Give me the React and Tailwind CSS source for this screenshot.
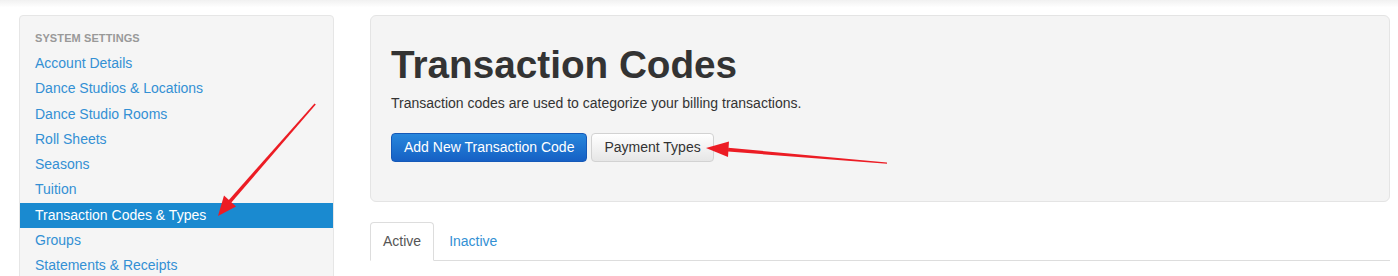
import React from "react";

const items = [
  "Account Details",
  "Dance Studios & Locations",
  "Dance Studio Rooms",
  "Roll Sheets",
  "Seasons",
  "Tuition",
  "Transaction Codes & Types",
  "Groups",
  "Statements & Receipts",
];

function Arrows() {
  return (
    <svg
      className="absolute left-0 top-0 pointer-events-none"
      width="1398"
      height="276"
      viewBox="0 0 1398 276"
    >
      <polygon points="314.5,103.5 315.8,104.6 231.4,202.4 228.4,200.4" fill="#ec1c24" />
      <polygon points="218,216 236,206.5 224,195.5" fill="#ec1c24" />
      <polygon points="887,162.5 887,163.8 728,151.5 728.2,147.8" fill="#ec1c24" />
      <polygon points="706,148 729,141.5 728,157" fill="#ec1c24" />
    </svg>
  );
}

export default function App() {
  return (
    <div
      className="relative w-[1398px] h-[276px] overflow-hidden bg-white text-[#333]"
      style={{ fontFamily: '"Liberation Sans", Arial, sans-serif' }}
    >
      <div className="h-[15px] bg-gradient-to-b from-[#f1f1f1] via-white to-white" />
      <div className="flex gap-[36px] pl-[19px] pr-[8px]">
        <div className="w-[315px] shrink-0 h-[300px] bg-[#f5f5f5] border border-[#e6e6e6] rounded-[4px] pt-[10px]">
          <div className="h-[25px] flex items-center pl-[15px] text-[11px] font-bold text-[#999] tracking-[0.1px]">
            SYSTEM SETTINGS
          </div>
          {items.map((it) => {
            const active = it === "Transaction Codes & Types";
            return (
              <div
                key={it}
                className={
                  active
                    ? "h-[25.25px] flex items-center pl-[15px] text-[14px] bg-[#1a8ad0] text-white"
                    : "h-[25.25px] flex items-center pl-[15px] text-[14px] text-[#3390d4]"
                }
              >
                {it}
              </div>
            );
          })}
        </div>
        <div className="flex-1">
          <div className="h-[187px] bg-[#f4f4f4] border border-[#e4e4e4] rounded-[6px] pt-[28px] pl-[20px]">
            <h1 className="text-[38.7px] leading-[42px] font-bold text-[#333]">Transaction Codes</h1>
            <p className="mt-[7px] text-[14px] leading-[20px] text-[#333]">
              Transaction codes are used to categorize your billing transactions.
            </p>
            <div className="mt-[20px] flex gap-[4px]">
              <button className="h-[29px] px-[12px] text-[14px] text-white rounded-[4px] border border-[#1559b8] bg-gradient-to-b from-[#2887dc] to-[#1660c4]">
                Add New Transaction Code
              </button>
              <button className="h-[29px] px-[12px] text-[14px] text-[#333] rounded-[4px] border border-[#d2d2d2] bg-gradient-to-b from-white to-[#e6e6e6]">
                Payment Types
              </button>
            </div>
          </div>
          <div className="mt-[20px] flex border-b border-[#dddddd] h-[39px]">
            <div className="h-[39px] px-[12px] flex items-center text-[14px] text-[#555] bg-white border border-[#dddddd] border-b-white rounded-t-[4px] -mb-px">
              Active
            </div>
            <div className="h-[38px] px-[15px] flex items-center text-[14px] text-[#3390d4]">
              Inactive
            </div>
          </div>
        </div>
      </div>
      <Arrows />
    </div>
  );
}
